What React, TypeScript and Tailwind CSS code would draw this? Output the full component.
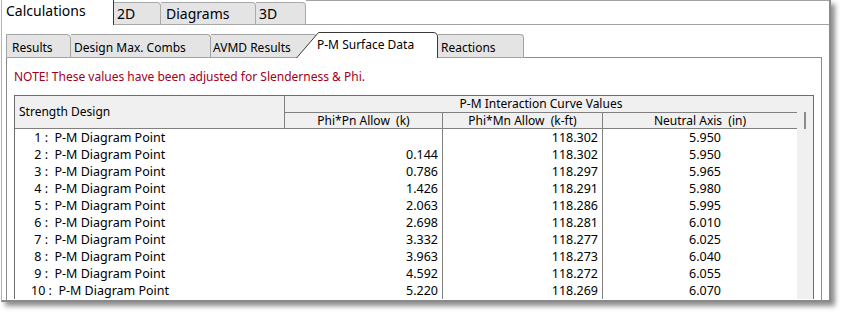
const rows = [
  [" 1", "", "118.302", "5.950"],
  [" 2", "0.144", "118.302", "5.950"],
  [" 3", "0.786", "118.297", "5.965"],
  [" 4", "1.426", "118.291", "5.980"],
  [" 5", "2.063", "118.286", "5.995"],
  [" 6", "2.698", "118.281", "6.010"],
  [" 7", "3.332", "118.277", "6.025"],
  [" 8", "3.963", "118.273", "6.040"],
  [" 9", "4.592", "118.272", "6.055"],
  ["10", "5.220", "118.269", "6.070"],
];

const TopTab = ({ label, w, pl }: { label: string; w: string; pl: string }) => (
  <div
    className={`${w} ${pl} h-[23px] shrink-0 border-t border-r border-b border-[#a9a9a9] rounded-tr-[4px] bg-[#e4e4e4] text-[14px] leading-[20px] pt-[1px]`}
  >
    {label}
  </div>
);

const SubTab = ({ label, cls }: { label: string; cls: string }) => (
  <div
    className={`${cls} h-[24px] shrink-0 border-t border-r border-b border-[#a3a3a3] rounded-tr-[4px] bg-[#e4e4e4] text-[12px] leading-[22px] pt-[2px] whitespace-nowrap overflow-hidden`}
  >
    {label}
  </div>
);

export default function App() {
  return (
    <div className="w-[845px] h-[316px] bg-white overflow-hidden font-['Noto_Sans',sans-serif] text-black">
      <div className="ml-[1px] w-[830px] h-[302px] border-l border-r-2 border-b-2 border-l-[#b4b4b4] border-r-[#8a8a8a] border-b-[#8a8a8a] bg-white shadow-[4px_4px_5px_rgba(0,0,0,0.45)] flex flex-col overflow-hidden">
        {/* main tab strip */}
        <div className="flex items-end h-[25px] shrink-0">
          <div className="w-[112px] h-full shrink-0 border-r border-[#3a3a3a] pl-[4px] text-[14px] leading-[22px]">
            Calculations
          </div>
          <TopTab label="2D" w="w-[47px]" pl="pl-[3px]" />
          <TopTab label="Diagrams" w="w-[95px]" pl="pl-[5px]" />
          <TopTab label="3D" w="w-[50px]" pl="pl-[3px]" />
          <div className="flex-1 h-full border-t border-b border-[#a3a3a3]" />
        </div>

        {/* body */}
        <div className="flex-1 pl-[4px] flex flex-col min-h-0">
          <div className="w-[816px] h-[33px] shrink-0 flex items-end">
            <SubTab label="Results" cls="w-[65px] pl-[5px] border-l" />
            <SubTab label="Design Max. Combs" cls="w-[140px] pl-[3px]" />
            <SubTab label="AVMD Results" cls="w-[106px] pl-[2px]" />
            <div className="relative z-10 ml-[-21px] w-[142px] h-[26px] shrink-0 text-[12px] leading-[22px] pt-[2px] pl-[21px] whitespace-nowrap">
              <svg className="absolute inset-0" width="142" height="26" viewBox="0 0 142 26">
                <path
                  d="M0.5 26 L22.5 0.5 L137 0.5 Q141.5 0.5 141.5 5 L141.5 26"
                  fill="#ffffff"
                  stroke="#3a3a3a"
                  strokeWidth="1"
                />
              </svg>
              <span className="relative">P-M Surface Data</span>
            </div>
            <SubTab label="Reactions" cls="w-[86px] pl-[3px]" />
            <div className="flex-1 h-px bg-[#8c8c8c]" />
          </div>

          {/* panel */}
          <div className="w-[816px] flex-1 border-l border-r border-[#8c8c8c] px-[7px] min-h-0">
            <div className="pt-[10px] text-[12px] leading-[17px] text-[#a00020]">
              NOTE! These values have been adjusted for Slenderness &amp; Phi.
            </div>
            <div className="mt-[10px] w-[800px] border-l border-t border-r border-[#6e6e6e] flex text-[12px]">
              <div className="w-[782px] flex flex-col">
                <div className="flex h-[33px] bg-[#f0f0f0]">
                  <div className="w-[270px] border-r border-b border-[#808080] flex items-center pl-[4px]">
                    Strength Design
                  </div>
                  <div className="w-[512px] flex flex-col">
                    <div className="h-[17px] border-b border-[#808080] text-center leading-[16px]">
                      P-M Interaction Curve Values
                    </div>
                    <div className="h-[16px] border-b border-[#808080] flex leading-[15px] whitespace-pre">
                      <div className="w-[158px] border-r border-[#808080] text-center">Phi*Pn Allow  (k)</div>
                      <div className="w-[160px] border-r border-[#808080] text-center">Phi*Mn Allow  (k-ft)</div>
                      <div className="w-[194px] text-center">Neutral Axis  (in)</div>
                    </div>
                  </div>
                </div>
                {rows.map((r) => (
                  <div key={r[0]} className="flex h-[17px] leading-[17px] text-[12.5px]">
                    <div className="w-[270px] pl-[16px] whitespace-pre">{`${r[0]} :  P-M Diagram Point`}</div>
                    <div className="w-[158px] border-r border-[#808080] text-right pr-[4px]">{r[1]}</div>
                    <div className="w-[160px] border-r border-[#808080] text-right pr-[4px]">{r[2]}</div>
                    <div className="w-[194px] text-center pl-[10px]">{r[3]}</div>
                  </div>
                ))}
              </div>
              <div className="w-[16px] bg-[#f0f0f0] pt-[16px]">
                <div className="ml-[7px] w-[2px] h-[17px] bg-[#8c8c8c]" />
              </div>
            </div>
          </div>
        </div>
      </div>
    </div>
  );
}
